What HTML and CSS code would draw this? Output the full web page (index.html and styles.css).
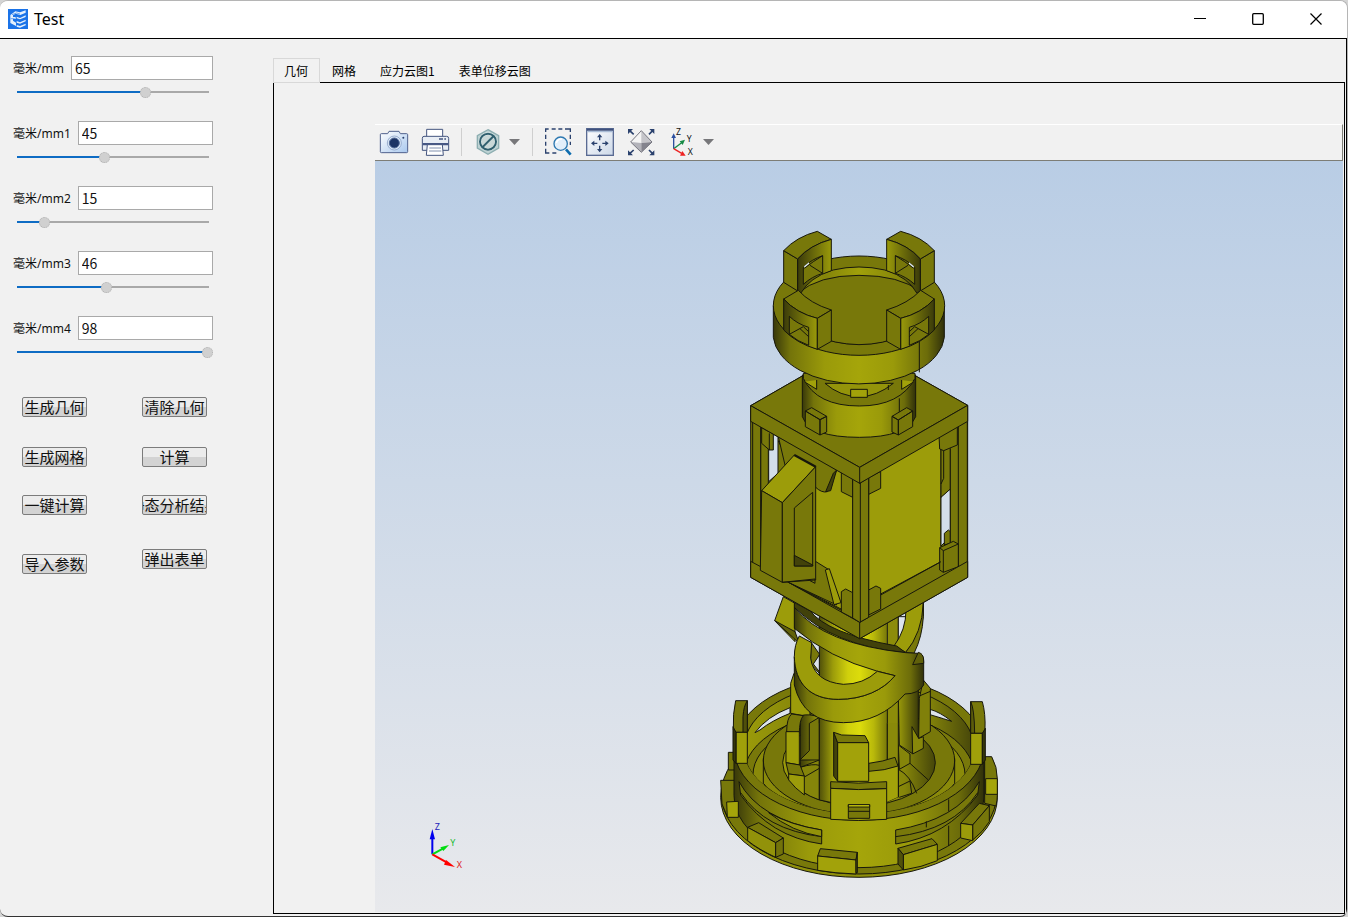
FILE: index.html
```html
<!DOCTYPE html>
<html lang="zh-CN">
<head>
<meta charset="utf-8">
<title>Test</title>
<link rel="stylesheet" href="styles.css">
</head>
<body>
<div class="window">
  <header class="titlebar">
    <svg class="logo" viewBox="24 27 60 60" aria-hidden="true">
      <rect x="24" y="27" width="60" height="60" fill="#1a73e8"/>
      <path d="M31 45 46 34 60 37 77 31V38L61 45 47 41 39 46V51H47V57H39V62L48 68V78L31 69Z" fill="#e4f0fc"/>
      <path d="M36 44 50 39 60 42M32 56H44" stroke="#2d7fe8" stroke-width="2" fill="none"/>
      <path d="M50 50 60 54 77 46V51L60 58 50 55ZM50 63 60 67 77 59V64L60 71 50 68ZM50 75 60 78 77 71V76L60 83 50 80Z" fill="#e4f0fc"/>
    </svg>
    <h1 class="title">Test</h1>
    <div class="caption">
      <button class="cap-btn" aria-label="最小化"><svg width="12" height="12"><path d="M0 5.5H12" stroke="#000"/></svg></button>
      <button class="cap-btn" aria-label="最大化"><svg width="12" height="12"><rect x=".7" y=".7" width="10.6" height="10.6" rx="1" fill="none" stroke="#000" stroke-width="1.3"/></svg></button>
      <button class="cap-btn" aria-label="关闭"><svg width="12" height="12"><path d="M.5.5 11.5 11.5M11.5.5.5 11.5" stroke="#000" stroke-width="1.2"/></svg></button>
    </div>
  </header>
  <main class="main">
    <aside class="side">
      <div class="fields">
        <div class="field">
          <div class="field-row"><label for="p0">毫米/mm</label><input class="num" id="p0" type="text" value="65"></div>
          <input class="slider" type="range" min="0" max="96" value="65" style="--v:65" aria-label="毫米/mm">
        </div>
        <div class="field">
          <div class="field-row"><label for="p1">毫米/mm1</label><input class="num" id="p1" type="text" value="45"></div>
          <input class="slider" type="range" min="0" max="96" value="45" style="--v:45" aria-label="毫米/mm1">
        </div>
        <div class="field">
          <div class="field-row"><label for="p2">毫米/mm2</label><input class="num" id="p2" type="text" value="15"></div>
          <input class="slider" type="range" min="0" max="96" value="15" style="--v:15" aria-label="毫米/mm2">
        </div>
        <div class="field">
          <div class="field-row"><label for="p3">毫米/mm3</label><input class="num" id="p3" type="text" value="46"></div>
          <input class="slider" type="range" min="0" max="96" value="46" style="--v:46" aria-label="毫米/mm3">
        </div>
        <div class="field">
          <div class="field-row"><label for="p4">毫米/mm4</label><input class="num" id="p4" type="text" value="98"></div>
          <input class="slider" type="range" min="0" max="96" value="96" style="--v:96" aria-label="毫米/mm4">
        </div>
      </div>
      <div class="actions">
        <button class="btn">生成几何</button><button class="btn">清除几何</button>
        <button class="btn">生成网格</button><button class="btn">计算</button>
        <button class="btn">一键计算</button><button class="btn btn-clip">静态分析结果</button>
        <button class="btn btn-low">导入参数</button><button class="btn">弹出表单</button>
      </div>
    </aside>
    <section class="content">
      <div class="tabs" role="tablist">
        <button class="tab tab-active" role="tab" aria-selected="true">几何</button>
        <button class="tab" role="tab">网格</button>
        <button class="tab" role="tab">应力云图1</button>
        <button class="tab" role="tab">表单位移云图</button>
      </div>
      <div class="panel">
        <div class="viewer">
          <div class="toolbar">
            <button class="tool" aria-label="截图"><svg viewBox="45 39 84 84">
              <defs><linearGradient id="cam" x2="1" y2="1"><stop offset="0" stop-color="#fff"/><stop offset="1" stop-color="#a9c8ee"/></linearGradient></defs>
              <path d="M49 56H68L72 49H102L106 56H125Q128 56 128 59V110Q128 113 125 113H49Q46 113 46 110V59Q46 56 49 56Z" fill="url(#cam)" stroke="#50618c" stroke-width="3"/>
              <circle cx="88" cy="84" r="21" fill="#dce9f8" stroke="#7c93bb" stroke-width="2"/><circle cx="88" cy="84" r="15" fill="#1d3464" stroke="#536b99" stroke-width="3"/><circle cx="115" cy="68" r="3" fill="#2b426e"/></svg></button>
            <button class="tool" aria-label="打印"><svg viewBox="168 39 84 84">
              <path d="M185 67V43H233V67" fill="#fff" stroke="#44557f" stroke-width="3"/>
              <path d="M177 64H245Q251 64 251 70V106H172V70Q172 64 177 64Z" fill="#e8edf4" stroke="#44557f" stroke-width="3"/>
              <path d="M173 84H250V91H173Z" fill="#465784"/><path d="M222 72H234M238 72H243" stroke="#44557f" stroke-width="4"/>
              <path d="M187 89H232L235 121H184Z" fill="#fff" stroke="#44557f" stroke-width="3"/><path d="M193 99H228M192 108H229" stroke="#8090ae" stroke-width="3"/></svg></button>
            <span class="sep"></span>
            <span class="combo">
              <button class="tool" aria-label="选择"><svg viewBox="327 39 84 84">
                <path d="M369 44 401 62V99L369 118 337 99V62Z" fill="#bdd2d3" stroke="#8daeb1" stroke-width="4"/>
                <circle cx="369" cy="80" r="24" fill="#c9d8d8" stroke="#e4eeee" stroke-width="8"/><circle cx="369" cy="80" r="24" fill="none" stroke="#30606f" stroke-width="6"/><path d="M352 97 386 63" stroke="#30606f" stroke-width="6"/></svg></button>
              <button class="caret" aria-label="更多选择"></button>
            </span>
            <span class="sep"></span>
            <button class="tool" aria-label="框选缩放"><svg viewBox="540 39 84 84">
              <path d="M542 51V42H551M560 42H572M580 42H592M600 42H616V51M616 59V72M616 80V90M542 59V72M542 80V92M542 101V114H553M562 114H574" fill="none" stroke="#2b426e" stroke-width="4"/>
              <path d="M603 103 617 119" stroke="#0d6cae" stroke-width="8"/><circle cx="587" cy="86" r="20" fill="#e2effa" stroke="#2d78b0" stroke-width="4"/><path d="M574 84Q577 71 591 72" fill="none" stroke="#fff" stroke-width="5"/></svg></button>
            <button class="tool" aria-label="适应窗口"><svg viewBox="663 39 84 84">
              <defs><linearGradient id="fit" x2="1" y2="1"><stop offset="0" stop-color="#fff"/><stop offset="1" stop-color="#ccd8e8"/></linearGradient></defs>
              <rect x="665" y="41" width="80" height="80" fill="url(#fit)" stroke="#5a6b93" stroke-width="4"/><path d="M666 44H744" stroke="#3e507d" stroke-width="6"/><path d="M667 50H743" stroke="#a9bcd6" stroke-width="4"/>
              <path d="M704 65V76M704 92V104M686 85H697M712 85H724" stroke="#2b426e" stroke-width="4"/>
              <path d="M696 67 704 57 712 67ZM696 102 704 112 712 102ZM688 77 678 85 688 93ZM721 77 731 85 721 93Z" fill="#2b426e"/></svg></button>
            <button class="tool" aria-label="缩放全部"><svg viewBox="786 39 84 84">
              <path d="M829 47 797 81 829 84Z" fill="#f4f4f4"/><path d="M829 47 861 81 829 84Z" fill="#c5c5ca"/><path d="M797 81 829 84V112Z" fill="#b3b3ba"/><path d="M861 81 829 112V84Z" fill="#84848e"/><path d="M829 47 861 81 829 112 797 81Z" fill="none" stroke="#777781" stroke-width="3"/>
              <path d="M794 47 806 58M863 47 852 58M794 116 806 105M863 116 852 105" stroke="#2b426e" stroke-width="5"/>
              <path d="M789 42H804L789 57ZM868 42H853L868 57ZM789 121V106L804 121ZM868 121V106L853 121Z" fill="#2b426e"/></svg></button>
            <span class="combo">
              <button class="tool" aria-label="视图方向"><svg viewBox="912 39 84 84">
                <path d="M929 101V66" stroke="#2d50a0" stroke-width="4"/><path d="M922 69 929 55 936 69Z" fill="#2d50a0"/>
                <path d="M929 101 953 83" stroke="#168a45" stroke-width="4"/><path d="M947 79 963 74 956 90Z" fill="#168a45"/>
                <path d="M929 101 953 115" stroke="#e22" stroke-width="4"/><path d="M955 108 965 122 948 122Z" fill="#e22"/>
                <text class="axis-ico" x="936" y="60">Z</text><text class="axis-ico" x="968" y="82">Y</text><text class="axis-ico" x="971" y="119">X</text></svg></button>
              <button class="caret" aria-label="更多视图"></button>
            </span>
          </div>
          <div class="scene">
            <svg class="model" width="282" height="653" viewBox="718 229 282 653" role="img" aria-label="三维几何模型">
              <defs>
                <linearGradient id="wall"><stop offset="0" stop-color="#38380a"/><stop offset=".1" stop-color="#74740a"/><stop offset=".3" stop-color="#9a9a0a"/><stop offset=".5" stop-color="#a5a50a"/><stop offset=".7" stop-color="#9a9a0a"/><stop offset=".9" stop-color="#6c6c0a"/><stop offset="1" stop-color="#30300a"/></linearGradient>
                <linearGradient id="inner"><stop offset="0" stop-color="#9b9b0a"/><stop offset=".25" stop-color="#85850a"/><stop offset=".5" stop-color="#a0a00a"/><stop offset=".8" stop-color="#85850a"/><stop offset="1" stop-color="#45450a"/></linearGradient>
                <linearGradient id="col"><stop offset="0" stop-color="#50500a"/><stop offset=".2" stop-color="#9c9c0a"/><stop offset=".42" stop-color="#d0d00c"/><stop offset=".6" stop-color="#dcdc0c"/><stop offset=".8" stop-color="#b8b80a"/><stop offset="1" stop-color="#77770a"/></linearGradient>
                <linearGradient id="edge"><stop offset="0" stop-color="#9a9a0a"/><stop offset="1" stop-color="#3b3b0a"/></linearGradient>
                <linearGradient id="edge2"><stop offset="0" stop-color="#3b3b0a"/><stop offset="1" stop-color="#9a9a0a"/></linearGradient>
                <clipPath id="well"><ellipse cx="447" cy="204" rx="345" ry="196"/></clipPath>
              </defs>

              <!-- base -->
              <g class="part" transform="translate(710 680) scale(.33333)">
                <ellipse cx="447" cy="352" rx="415" ry="240" fill="#8f8f0a"/>
                <ellipse cx="447" cy="342" rx="413" ry="240" fill="#78780a"/>
                <path d="M55 217H75V270H55ZM32 301H75V410H52L36 372Z" fill="#78780a"/>
                <path d="M824 230H845Q862 260 862 296V345Q862 360 858 378L824 370Z" fill="#78780a"/>
                <path d="M72 204V346A375 217 0 0 0 822 346V204Z" fill="url(#wall)"/>
                <path d="M50 366 85 364V412H52Z" fill="#a5a50a"/>
                <path d="M827 296H862V343H827Z" fill="#a5a50a"/>
                <ellipse cx="447" cy="204" rx="375" ry="217" fill="#78780a"/>
                <ellipse cx="447" cy="204" rx="345" ry="196" fill="url(#inner)"/>
                <g clip-path="url(#well)">
                  <path d="M135 158Q170 110 240 83V100Q185 122 150 150Z" fill="#dce3ec"/>
                  <path d="M660 88Q690 96 725 124L700 116 660 104Z" fill="#dce3ec"/>
                  <ellipse cx="447" cy="284" rx="345" ry="190" fill="#78780a"/>
                  <ellipse cx="447" cy="284" rx="318" ry="172" fill="#8a8a0a"/>
                  <ellipse cx="447" cy="242" rx="287" ry="162" fill="#78780a"/>
                  <path d="M160 235V310Q210 370 355 395M734 235V310Q690 370 535 395" fill="none"/>
                  <ellipse cx="447" cy="248" rx="229" ry="130" fill="url(#inner)"/>
                  <path d="M270 250Q300 235 328 232V360Q270 340 240 300Z" fill="#85850a"/>
                  <path d="M270 262Q310 250 328 256M285 290 328 265" fill="none"/>
                  <path d="M565 268Q600 285 620 340M600 250 655 300M565 320 600 303 605 340 568 352" fill="none"/>
                </g>
                <!-- back posts -->
                <path d="M242 10 252 -20H300V180L280 107 242 100Z" fill="#9c9c0a"/>
                <path d="M271 107Q300 100 328 112V240L271 262Z" fill="url(#edge2)"/>
                <path d="M298 130 328 112V240H270L298 212Z" fill="#78780a"/>
                <path d="M230 155Q230 115 245 102L280 107Q268 120 268 160Z" fill="#78780a"/>
                <path d="M228 155H268V255L228 248Z" fill="#a0a00a"/>
                <path d="M228 248 270 255 283 288 236 282Z" fill="#78780a"/>
                <path d="M236 282 283 288V345Q255 325 236 300Z" fill="#9c9c0a"/>
                <path d="M565 50 625 20V205L606 220 568 195Z" fill="url(#edge)"/>
                <path d="M565 195 600 222V250L568 268Z" fill="#85850a"/>
                <path d="M606 140 626 175 640 170V205L608 222Z" fill="#87870a"/>
                <path d="M628 55 640 0 661 25V155L626 175Z" fill="#80800a"/>
                <path d="M628 48 661 34" fill="none"/>
                <!-- central column -->
                <path d="M328 -60H532V360L447 385 328 360Z" fill="url(#col)"/>
                <path d="M532 -60H565V350L532 365Z" fill="#89890a"/>
                <path class="flat" d="M383 250H476L564 250V351L530 366V400H365V300H383Z" fill="#a2a20a"/>
                <path d="M565 250V352" fill="none"/>
                <path d="M476 250Q520 245 555 232L564 258Q525 272 476 274Z" fill="#78780a"/>
                <path d="M371 157 383 188V304L371 288Z" fill="#42420a"/>
                <path d="M371 157 395 165 465 167 476 188 383 188Z" fill="#78780a"/>
                <path d="M383 188H476V304H383Z" fill="#a2a20a"/>
                <!-- side posts -->
                <path d="M77 62H112V157H78L70 150Q68 100 77 62Z" fill="#78780a"/>
                <path d="M99 110Q101 78 112 62V157H99Z" fill="#50500a"/>
                <path d="M78 157H112V250H78Z" fill="#a0a00a"/>
                <path d="M69 140 78 157V250L69 240Z" fill="#35350a"/>
                <path d="M782 65H817Q827 100 825 150L817 160H782Z" fill="#78780a"/>
                <path d="M782 65Q793 85 794 160H782Z" fill="#5b5b0a"/>
                <path d="M782 160H817V253H782Z" fill="#a0a00a"/>
                <path d="M817 160 826 145V240L817 253Z" fill="#35350a"/>
                <!-- slots in the outer wall -->
                <path d="M87 305Q150 420 335 450V492Q180 470 92 345Z" fill="#78780a"/>
                <path d="M92 338Q165 450 335 470" fill="none"/>
                <path d="M176 398Q240 435 335 450V470Q245 455 176 398Z" fill="#92920a"/>
                <path d="M808 305Q740 420 557 450V492Q710 470 803 345Z" fill="#78780a"/>
                <path d="M803 338Q730 450 557 470" fill="none"/>
                <path d="M716 358V394M716 437V498M649 424V442" fill="none"/>
                <!-- front block -->
                <path d="M362 305Q445 314 530 305V326Q445 332 362 325Z" fill="#78780a"/>
                <path d="M362 325Q445 332 530 326V418Q445 425 362 418Z" fill="#a2a20a"/>
                <path d="M415 374H479V415H415Z" fill="#78780a"/>
                <path d="M415 374H479V381H415Z" fill="#d4d40c"/><path d="M415 394H479" fill="none"/>
                <!-- rim teeth -->
                <path d="M113 442 146 428 220 474 197 488Z" fill="#78780a"/><path d="M113 442 197 488V532Q145 508 113 482Z" fill="#92920a"/><path d="M197 488 220 474V522L197 532Z" fill="#72720a"/>
                <path d="M323 528 331 506 442 517 438 540Z" fill="#78780a"/><path d="M323 528 438 540V582Q375 580 323 571Z" fill="#a2a20a"/><path d="M438 540 442 517V578H438Z" fill="#55550a"/>
                <path d="M564 505 666 476 682 493 580 524Z" fill="#78780a"/><path d="M580 524 682 493V542Q635 562 580 570Z" fill="#9a9a0a"/><path d="M564 505 580 524V570L564 552Z" fill="#50500a"/>
                <path d="M752 430 808 370 838 377 788 435Z" fill="#78780a"/><path d="M788 435 838 377V425Q820 455 788 480Z" fill="#76760a"/><path d="M752 430 788 435V482L752 474Z" fill="#9b9b0a"/>
              </g>

              <!-- helix -->
              <g class="part" transform="translate(760 590) scale(.33333)">
                <path d="M70 20 105 40V155L44 92Z" fill="#9c9c0a"/><path d="M44 92 105 125 118 160Z" fill="#62620a"/>
                <path class="flat" d="M178 40H382V400H178Z" fill="url(#col)"/><path class="flat" d="M382 40H415V400H382Z" fill="#8c8c0a"/>
                <path d="M178 40V400M382 40V400M415 40V400" fill="none"/>
                <path d="M415 80H438V130L415 165Z" fill="#dce3ec"/>
                <path d="M438 60 490 35V75Q486 140 437 187L402 168Q438 120 438 60Z" fill="#9c9c0a"/>
                <path d="M490 40V80Q487 140 462 190L437 187Q486 130 490 40Z" fill="#78780a"/>
                <path d="M152 155 178 192V250L152 222Z" fill="#78780a"/><path d="M160 222 178 195V245Z" fill="#dce3ec"/>
                <path d="M103 38 150 62Q200 130 410 168L437 188Q220 168 103 52Z" fill="#41410a"/>
                <path d="M103 52Q190 162 437 188L475 190Q491 192 491 215V285Q475 312 435 312 360 398 250 398 130 398 103 285V200C105 280 150 328 235 328 310 328 370 300 405 257L350 243Q210 205 103 115Z" fill="url(#wall)"/>
                <path d="M475 187Q491 192 491 210V220L458 224Z" fill="#60600a"/>
                <path d="M118 138Q103 165 103 200C105 280 150 328 235 328 310 328 370 300 405 257L352 244Q310 283 250 283 162 275 152 205L155 158Z" fill="#9c9c0a"/>
              </g>

              <!-- cage -->
              <g class="part" transform="translate(740 370) scale(.33333)">
                <path d="M32 107 187 18H527L683 106V622L359 806 32 622Z" fill="#78780a"/>
                <path d="M108 200 338 325V735L150 638V280Z" fill="#9c9c0a"/>
                <path d="M386 305 603 185V575L386 695Z" fill="#9c9c0a"/>
                <path d="M62 170 85 183V580H62Z" fill="#78780a"/>
                <path d="M86 185 114 200V310L86 335Z" fill="#d3deea"/>
                <path d="M65 173 100 192V240H88L65 220ZM88 190V240" fill="#78780a"/>
                <path d="M115 200 220 255 290 300 262 365Q245 370 225 350L135 285Z" fill="#78780a"/>
                <path d="M290 300 272 362 257 365 280 310Z" fill="#42420a"/>
                <path d="M304 300 338 322V382L304 365ZM386 323 422 304V355L386 373Z" fill="#78780a"/>
                <path d="M603 380 631 357V500L603 528Z" fill="#d3deea"/>
                <path d="M603 190 631 220V357L603 382Z" fill="#78780a"/><path d="M611 240V325L603 342" fill="none"/>
                <path d="M597 195 652 165V225L611 242 599 237Z" fill="#78780a"/>
                <path d="M613 490 625 480 631 485V520L613 525Z" fill="#78780a"/>
                <path class="flat" d="M655 165H682V590H655ZM631 235H655V590H631ZM38 155H62V590H38Z" fill="#78780a"/>
                <path d="M655 165V590M631 235V520M682 150V590M38 155V590M62 165V590" fill="none"/>
                <path d="M599 533 640 514 655 522V590L610 607 599 600ZM599 533 610 542V607M610 542 655 522" fill="#78780a"/>
                <path d="M32 574 62 590 359 757 683 574V622L359 806 32 622Z" fill="#78780a"/>
                <path d="M145 637 228 575 265 598 290 705Z" fill="#78780a"/><path d="M256 600 268 596 303 698 282 704Z" fill="#9c9c0a"/>
                <path d="M145 637 359 750M422 672 603 575" fill="none"/>
                <path d="M304 665 317 657 338 668V744L304 726ZM386 660 408 648 422 655V717L386 735Z" fill="#78780a"/>
                <path d="M338 320 359 340 386 323V742L359 757 338 744Z" fill="#78780a"/><path d="M361 335V757" fill="none"/>
                <path d="M32 107 187 18H527L683 106 359 292Z" fill="#78780a"/>
                <path d="M32 107 359 292 683 106V154L359 340 32 154Z" fill="#78780a"/><path d="M359 292V340M359 757V806" fill="none"/>
                <path d="M65 362 163 255 227 290 127 398Z" fill="#9c9c0a"/>
                <path d="M65 362 127 398V637L61 601Z" fill="#78780a"/>
                <path d="M127 398 227 290V630L127 637Z" fill="#78780a"/>
                <path d="M163 414 218 367V588H163Z" fill="#78780a"/><path d="M163 556 218 585V588H163Z" fill="#42420a"/>
                <path d="M163 255 227 290" stroke-width="7"/>
                <path d="M127 637 225 627V640L210 632" fill="none"/>
              </g>

              <!-- neck and crown -->
              <g class="part" transform="translate(760 220) scale(.33333)">
                <path d="M127 465V590Q150 652 298 652 440 652 467 590V465Z" fill="url(#wall)"/>
                <path d="M130 475Q170 558 298 558 420 558 465 475V460H130Z" fill="#78780a"/>
                <path d="M195 490Q240 530 298 530 350 530 400 490Z" fill="#94940a"/>
                <path d="M272 508H322V532H272ZM170 480V508L133 485M425 480V508L462 485M385 495V510M418 535V610" fill="#a2a20a"/>
                <path d="M136 573 155 563 200 589 180 599ZM136 573 180 599V645L136 620ZM180 599 200 589V636L180 645Z" fill="#78780a"/>
                <path d="M396 589 440 563 458 573 415 600ZM415 600 458 573V620L415 645ZM396 589 415 600V645L396 636Z" fill="#78780a"/>
                <path d="M40 257V352A257 149 0 0 0 553 352V257Z" fill="url(#wall)"/>
                <path d="M478 364V457" fill="none"/>
                <ellipse cx="297" cy="257" rx="257" ry="149" fill="#78780a"/>
                <ellipse cx="297" cy="257" rx="200" ry="116" fill="url(#inner)"/>
                <path d="M113 220Q175 166 297 166T482 215Q500 240 495 270 450 372 297 374 140 370 97 270 97 240 113 220Z" fill="#78780a"/>
                <!-- rear battlements -->
                <path d="M71 92 113 117V213L71 187Z" fill="#78780a"/><path d="M71 92Q110 50 172 34L214 58Q150 75 113 117Z" fill="#78780a"/><path d="M113 117Q150 75 214 58V152Q150 172 122 220L113 213Z" fill="url(#edge2)"/>
                <path d="M130 142Q155 118 188 107V160Q155 170 130 193Z" fill="#78780a"/><path class="flat" d="M132 139 147 127V132L134 143Z" fill="#dce7f2"/><path d="M133 145 160 125 188 107M150 136 188 160" fill="none"/>
                <path d="M523 92 481 117V213L523 187Z" fill="#78780a"/><path d="M523 92Q485 50 422 34L380 58Q445 75 481 117Z" fill="#78780a"/><path d="M481 117Q445 75 380 58V152Q445 172 471 220L481 213Z" fill="url(#edge)"/>
                <path d="M464 142Q439 118 406 107V160Q439 170 464 193Z" fill="#78780a"/><path class="flat" d="M462 139 447 127V132L460 143Z" fill="#dce7f2"/><path d="M461 145 434 125 406 107M444 136 406 160" fill="none"/>
                <!-- front battlements -->
                <path d="M71 237 115 211Q150 250 214 270L172 295Q110 280 71 237Z" fill="#78780a"/><path d="M71 237Q110 280 172 295V388Q110 370 71 330Z" fill="url(#edge2)"/><path d="M172 295 214 270V364L172 388Z" fill="#78780a"/>
                <path d="M88 289Q112 312 146 322V376Q112 364 88 343Z" fill="#78780a"/><path d="M88 343 130 320 146 335M120 326 146 350" fill="none"/>
                <path d="M523 237 482 211Q445 250 380 270L422 295Q484 280 523 237Z" fill="#78780a"/><path d="M523 237Q484 280 422 295V388Q484 370 523 330Z" fill="url(#edge)"/><path d="M422 295 380 270V364L422 388Z" fill="#78780a"/>
                <path d="M506 289Q482 312 448 322V376Q482 364 506 343Z" fill="#78780a"/><path d="M506 343 464 320 448 335M474 326 448 350" fill="none"/>
              </g>
            </svg>
            <svg class="triad" viewBox="84 30 114 150" aria-hidden="true">
              <path d="M97 133V80" stroke="#00e" stroke-width="6"/><path d="M89 88 97 57 105 88Z" fill="#00e"/>
              <path d="M97 133 130 115" stroke="#0d1" stroke-width="6"/><path d="M121 112 147 105 130 123Z" fill="#0d1"/>
              <path d="M97 133 140 157" stroke="#f00" stroke-width="6"/><path d="M138 150 165 171 132 164Z" fill="#f00"/>
              <text class="ax" x="104" y="59" fill="#22b">Z</text><text class="ax" x="151" y="107" fill="#2b3">Y</text><text class="ax" x="170" y="173" fill="#d22">X</text>
            </svg>
          </div>
        </div>
      </div>
    </section>
  </main>
</div>
</body>
</html>
```
FILE: styles.css
```css
* { box-sizing: border-box; }
body {
  margin: 0;
  background: #d4d4d4;
  color: #111;
  font: 12px/16px "Noto Sans", "Noto Sans CJK SC", sans-serif;
}
button { font: inherit; color: inherit; padding: 0; border: 0; background: none; }

.window {
  display: flex;
  flex-direction: column;
  min-height: 100vh;
  padding-bottom: 1px;
  background: #f1f1f1;
  border-top: 1px solid #b5b5b5;
  border-right: 1px solid #b5b5b5;
  border-bottom: 1px solid #333;
  border-radius: 8px;
  overflow: hidden;
}
.titlebar {
  display: flex;
  align-items: center;
  height: 38px;
  padding: 0 2px 2px 8px;
  background: #fff;
  border-bottom: 1px solid #000;
}
.logo { width: 20px; height: 20px; }
.title { margin: 0 auto 0 6px; font-size: 16px; line-height: 20px; font-weight: 400; color: #000; }
.caption { display: flex; height: 100%; }
.cap-btn { display: flex; align-items: center; justify-content: center; width: 58px; }

.main { display: flex; flex: 1; border-right: 1px solid #000; }
.side { flex: none; width: 273px; padding: 17px 60px 0 9px; }
.fields { display: flex; flex-direction: column; gap: 23px; }
.field { display: flex; flex-direction: column; gap: 6px; }
.field-row { display: flex; align-items: center; gap: 7px; padding-left: 4px; }
.field-row label { padding-top: 2px; }
.num {
  flex: 1;
  min-width: 0;
  height: 24px;
  padding: 0 3px;
  border: 1px solid #a9a9a9;
  background: #fff;
  font: 14px/20px "Noto Sans CJK SC", sans-serif;
  color: #111;
}
.slider {
  appearance: none;
  width: 100%;
  height: 12px;
  margin: 0;
  background:
    linear-gradient(#0e6cc4, #0e6cc4) 8px 5px / calc((100% - 11px) * var(--v) / 96 - 2px) 2px no-repeat,
    linear-gradient(#a9a9a9, #a9a9a9) 8px 5px / calc(100% - 12px) 2px no-repeat;
}
.slider::-webkit-slider-thumb {
  appearance: none;
  width: 11px;
  height: 11px;
  border: 1px dotted #b0b0b0;
  border-radius: 50%;
  background: #d0d0d0;
}
.actions {
  display: grid;
  grid-template-columns: 120px 65px;
  grid-template-rows: 50px 48px 54px 25px;
  align-items: start;
  margin: 39px 0 0 13px;
}
.btn {
  display: flex;
  align-items: center;
  justify-content: center;
  width: 65px;
  height: 20px;
  white-space: nowrap;
  border: 1px solid #7c7c7c;
  border-radius: 2px;
  background: linear-gradient(#ececec 50%, #d3d3d3 50%);
  font: 15px/18px "Noto Sans CJK SC", sans-serif;
}
.btn-clip { overflow-x: clip; }
.btn-low { align-self: end; }

.content { display: flex; flex: 1; flex-direction: column; min-width: 0; padding: 19px 1px 1px 0; }
.tabs { display: flex; height: 25px; margin-bottom: -1px; z-index: 1; }
.tab { height: 24px; padding: 2px 12px 0; font-family: "Noto Sans CJK SC", sans-serif; color: #000; }
.tab-active { height: 25px; padding: 1px 11px 0 10px; border: 1px solid #d8d8d8; background: #f1f1f1; }
.panel { display: flex; flex: 1; padding: 41px 1px 1px 101px; border: 1px solid #000; }
.viewer { display: flex; flex: 1; flex-direction: column; min-width: 0; }
.toolbar {
  display: flex;
  align-items: center;
  gap: 13px;
  height: 37px;
  padding: 0 0 1px 5px;
  border: solid #7d7d76;
  border-width: 1px 1px 1px 0;
  border-top-color: #fff;
}
.tool { display: block; width: 28px; height: 28px; }
.tool svg { display: block; width: 28px; height: 28px; overflow: visible; }
.sep { width: 1px; height: 28px; margin: 0 -1px; background: #cfcfcf; }
.combo { display: flex; align-items: center; gap: 7px; }
.caret { width: 11px; height: 6px; background: #77777a; clip-path: polygon(0 0, 100% 0, 50% 100%); }
.axis-ico { font: 26px "Noto Sans", sans-serif; fill: #111; }

.scene {
  position: relative;
  display: flex;
  flex: 1;
  justify-content: center;
  align-items: flex-start;
  padding-top: 68px;
  background: linear-gradient(#b9cde5, #e8e9ec);
}
.model { display: block; }
.part { stroke: #17170c; stroke-width: 3; stroke-linejoin: round; }
.flat { stroke: none; }
.triad { position: absolute; left: 53px; bottom: 42px; width: 38px; height: 50px; }
.ax { font: 27px "Noto Sans", sans-serif; }
```
